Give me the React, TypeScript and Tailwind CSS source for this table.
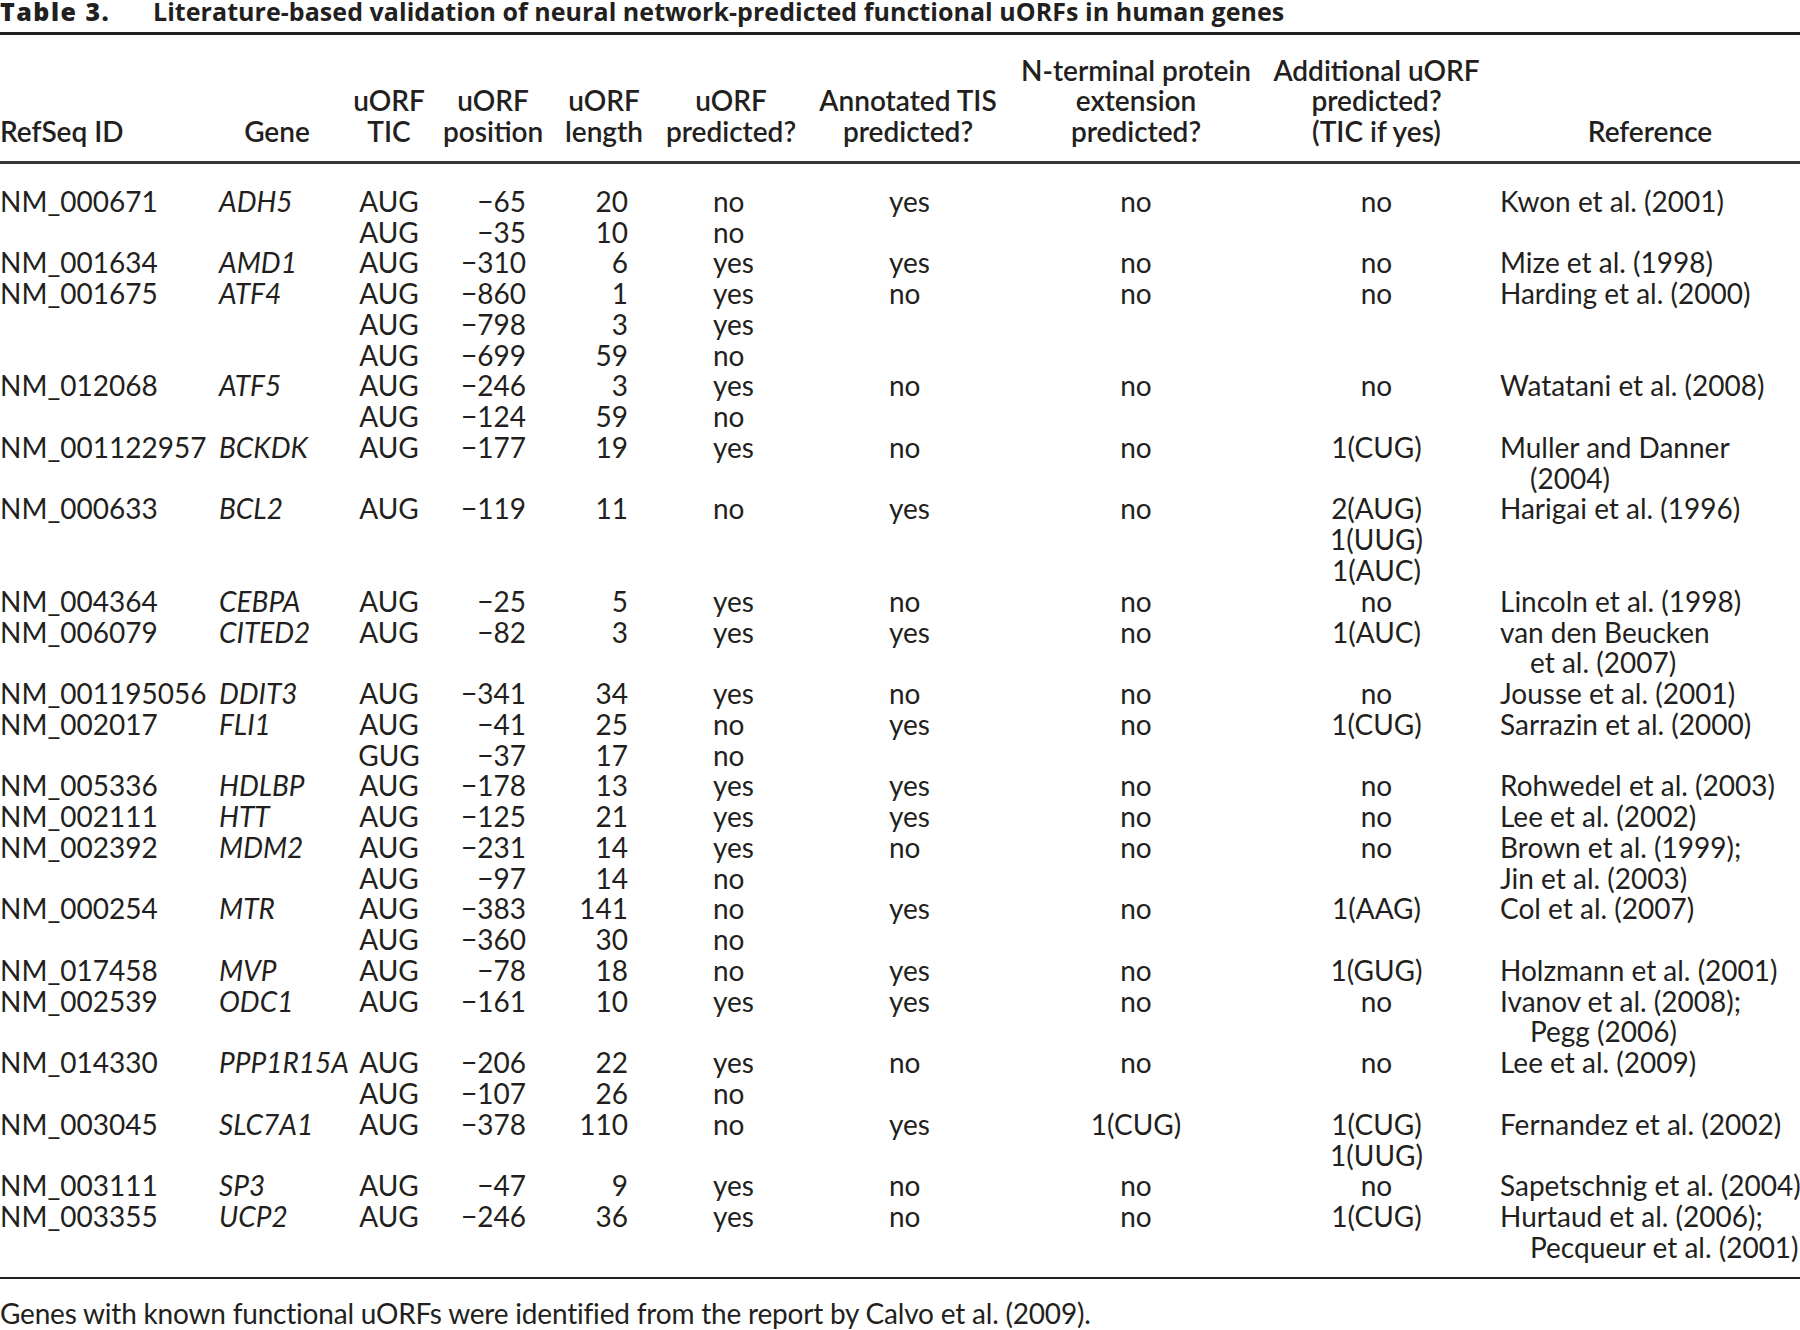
type Rec = {
  id: string;
  gene: string;
  tic: string[];
  pos: string[];
  len: string[];
  pred: string[];
  tis: string;
  nterm: string;
  add: string[];
  ref: string[];
  hang?: boolean;
};

const rows: Rec[] = [
  { id: "NM_000671", gene: "ADH5", tic: ["AUG", "AUG"], pos: ["−65", "−35"], len: ["20", "10"], pred: ["no", "no"], tis: "yes", nterm: "no", add: ["no"], ref: ["Kwon et al. (2001)"] },
  { id: "NM_001634", gene: "AMD1", tic: ["AUG"], pos: ["−310"], len: ["6"], pred: ["yes"], tis: "yes", nterm: "no", add: ["no"], ref: ["Mize et al. (1998)"] },
  { id: "NM_001675", gene: "ATF4", tic: ["AUG", "AUG", "AUG"], pos: ["−860", "−798", "−699"], len: ["1", "3", "59"], pred: ["yes", "yes", "no"], tis: "no", nterm: "no", add: ["no"], ref: ["Harding et al. (2000)"] },
  { id: "NM_012068", gene: "ATF5", tic: ["AUG", "AUG"], pos: ["−246", "−124"], len: ["3", "59"], pred: ["yes", "no"], tis: "no", nterm: "no", add: ["no"], ref: ["Watatani et al. (2008)"] },
  { id: "NM_001122957", gene: "BCKDK", tic: ["AUG"], pos: ["−177"], len: ["19"], pred: ["yes"], tis: "no", nterm: "no", add: ["1(CUG)"], ref: ["Muller and Danner", "(2004)"], hang: true },
  { id: "NM_000633", gene: "BCL2", tic: ["AUG"], pos: ["−119"], len: ["11"], pred: ["no"], tis: "yes", nterm: "no", add: ["2(AUG)", "1(UUG)", "1(AUC)"], ref: ["Harigai et al. (1996)"] },
  { id: "NM_004364", gene: "CEBPA", tic: ["AUG"], pos: ["−25"], len: ["5"], pred: ["yes"], tis: "no", nterm: "no", add: ["no"], ref: ["Lincoln et al. (1998)"] },
  { id: "NM_006079", gene: "CITED2", tic: ["AUG"], pos: ["−82"], len: ["3"], pred: ["yes"], tis: "yes", nterm: "no", add: ["1(AUC)"], ref: ["van den Beucken", "et al. (2007)"], hang: true },
  { id: "NM_001195056", gene: "DDIT3", tic: ["AUG"], pos: ["−341"], len: ["34"], pred: ["yes"], tis: "no", nterm: "no", add: ["no"], ref: ["Jousse et al. (2001)"] },
  { id: "NM_002017", gene: "FLI1", tic: ["AUG", "GUG"], pos: ["−41", "−37"], len: ["25", "17"], pred: ["no", "no"], tis: "yes", nterm: "no", add: ["1(CUG)"], ref: ["Sarrazin et al. (2000)"] },
  { id: "NM_005336", gene: "HDLBP", tic: ["AUG"], pos: ["−178"], len: ["13"], pred: ["yes"], tis: "yes", nterm: "no", add: ["no"], ref: ["Rohwedel et al. (2003)"] },
  { id: "NM_002111", gene: "HTT", tic: ["AUG"], pos: ["−125"], len: ["21"], pred: ["yes"], tis: "yes", nterm: "no", add: ["no"], ref: ["Lee et al. (2002)"] },
  { id: "NM_002392", gene: "MDM2", tic: ["AUG", "AUG"], pos: ["−231", "−97"], len: ["14", "14"], pred: ["yes", "no"], tis: "no", nterm: "no", add: ["no"], ref: ["Brown et al. (1999);", "Jin et al. (2003)"] },
  { id: "NM_000254", gene: "MTR", tic: ["AUG", "AUG"], pos: ["−383", "−360"], len: ["141", "30"], pred: ["no", "no"], tis: "yes", nterm: "no", add: ["1(AAG)"], ref: ["Col et al. (2007)"] },
  { id: "NM_017458", gene: "MVP", tic: ["AUG"], pos: ["−78"], len: ["18"], pred: ["no"], tis: "yes", nterm: "no", add: ["1(GUG)"], ref: ["Holzmann et al. (2001)"] },
  { id: "NM_002539", gene: "ODC1", tic: ["AUG"], pos: ["−161"], len: ["10"], pred: ["yes"], tis: "yes", nterm: "no", add: ["no"], ref: ["Ivanov et al. (2008);", "Pegg (2006)"], hang: true },
  { id: "NM_014330", gene: "PPP1R15A", tic: ["AUG", "AUG"], pos: ["−206", "−107"], len: ["22", "26"], pred: ["yes", "no"], tis: "no", nterm: "no", add: ["no"], ref: ["Lee et al. (2009)"] },
  { id: "NM_003045", gene: "SLC7A1", tic: ["AUG"], pos: ["−378"], len: ["110"], pred: ["no"], tis: "yes", nterm: "1(CUG)", add: ["1(CUG)", "1(UUG)"], ref: ["Fernandez et al. (2002)"] },
  { id: "NM_003111", gene: "SP3", tic: ["AUG"], pos: ["−47"], len: ["9"], pred: ["yes"], tis: "no", nterm: "no", add: ["no"], ref: ["Sapetschnig et al. (2004)"] },
  { id: "NM_003355", gene: "UCP2", tic: ["AUG"], pos: ["−246"], len: ["36"], pred: ["yes"], tis: "no", nterm: "no", add: ["1(CUG)"], ref: ["Hurtaud et al. (2006);", "Pecqueur et al. (2001)"], hang: true },
];

const grid =
  "grid grid-cols-[219px_116px_108px_100px_122px_132px_222px_234px_247px_300px]";

function Lines({ items, className }: { items: string[]; className?: string }) {
  return (
    <div className={className}>
      {items.map((t, i) => (
        <div key={i}>{t}</div>
      ))}
    </div>
  );
}

function HeaderCell({ lines, left }: { lines: string[]; left?: boolean }) {
  return (
    <div className={left ? "text-left" : "text-center"}>
      {lines.map((t, i) => (
        <div key={i} className="whitespace-nowrap">
          {t}
        </div>
      ))}
    </div>
  );
}

export default function App() {
  return (
    <div className="w-[1800px] h-[1330px] overflow-hidden bg-white text-[#231f20] font-['Lato',sans-serif] text-[28px] leading-[30.76px]">
      <div className="-mt-[1px] h-[24px] flex items-baseline whitespace-nowrap font-['Open_Sans',sans-serif] text-[25px] leading-[24px] font-bold">
        <span className="font-extrabold w-[153px] tracking-[1.5px]">Table 3.</span>
        <span className="tracking-[0.05px]">
          Literature-based validation of neural network-predicted functional uORFs in human genes
        </span>
      </div>
      <div className="mt-[9px] h-[2.5px] bg-[#231f20]" />

      <div className={grid + " items-end pt-[20px] pb-[14px] font-semibold"}>
        <HeaderCell lines={["RefSeq ID"]} left />
        <HeaderCell lines={["Gene"]} />
        <HeaderCell lines={["uORF", "TIC"]} />
        <HeaderCell lines={["uORF", "position"]} />
        <HeaderCell lines={["uORF", "length"]} />
        <HeaderCell lines={["uORF", "predicted?"]} />
        <HeaderCell lines={["Annotated TIS", "predicted?"]} />
        <HeaderCell lines={["N-terminal protein", "extension", "predicted?"]} />
        <HeaderCell lines={["Additional uORF", "predicted?", "(TIC if yes)"]} />
        <HeaderCell lines={["Reference"]} />
      </div>
      <div className="h-[3px] bg-[#3a3637]" />

      <div className="pt-[22px] pb-[14px]">
        {rows.map((r) => (
          <div key={r.id} className={grid + " items-start"}>
            <div>{r.id}</div>
            <div className="italic">{r.gene}</div>
            <Lines items={r.tic} className="text-center" />
            <Lines items={r.pos} className="text-right pr-[17px]" />
            <Lines items={r.len} className="text-right pr-[37px]" />
            <Lines items={r.pred} className="pl-[48px]" />
            <div className="pl-[92px]">{r.tis}</div>
            <div className="text-center">{r.nterm}</div>
            <Lines items={r.add} className="text-center" />
            <div className="whitespace-nowrap">
              {r.ref.map((t, i) => (
                <div key={i} className={i > 0 && r.hang ? "pl-[30px]" : ""}>
                  {t}
                </div>
              ))}
            </div>
          </div>
        ))}
      </div>
      <div className="h-[2.5px] bg-[#231f20]" />

      <div className="mt-[19px] whitespace-nowrap tracking-[-0.2px]">
        Genes with known functional uORFs were identified from the report by Calvo et al. (2009).
      </div>
    </div>
  );
}
